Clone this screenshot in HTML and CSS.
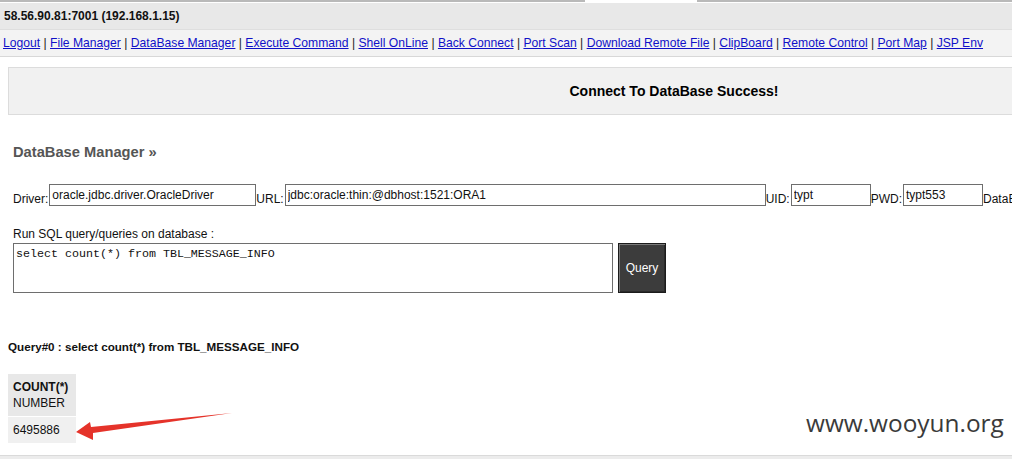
FILE: index.html
```html
<!DOCTYPE html>
<html>
<head>
<meta charset="utf-8">
<title>DataBase Manager</title>
<link rel="stylesheet" href="styles.css">
</head>
<body>
<div class="page">
  <div class="topline"><span class="seg-a"></span><span class="seg-b"></span><span class="seg-c"></span></div>
  <div class="host">58.56.90.81:7001 (192.168.1.15)</div>
  <div class="nav"><a href="#">Logout</a> | <a href="#">File Manager</a> | <a href="#">DataBase Manager</a> | <a href="#">Execute Command</a> | <a href="#">Shell OnLine</a> | <a href="#">Back Connect</a> | <a href="#">Port Scan</a> | <a href="#">Download Remote File</a> | <a href="#">ClipBoard</a> | <a href="#">Remote Control</a> | <a href="#">Port Map</a> | <a href="#">JSP Env</a></div>
  <div class="msg">Connect To DataBase Success!</div>
  <h2 class="title">DataBase Manager »</h2>
  <div class="conn">
    <span class="lbl">Driver:</span><input class="in in-driver" value="oracle.jdbc.driver.OracleDriver">
    <span class="lbl">URL:</span><input class="in in-url" value="jdbc:oracle:thin:@dbhost:1521:ORA1">
    <span class="lbl">UID:</span><input class="in in-small" value="typt">
    <span class="lbl">PWD:</span><input class="in in-small" value="typt553">
    <span class="lbl">DataBase:</span><input class="in in-small" value="ORACLE">
  </div>
  <div class="sqllbl">Run SQL query/queries on database :</div>
  <div class="sqlrow">
    <textarea class="sql">select count(*) from TBL_MESSAGE_INFO</textarea>
    <button class="qbtn">Query</button>
  </div>
  <div class="qtitle">Query#0 : select count(*) from TBL_MESSAGE_INFO</div>
  <table class="res">
    <tr><th><b>COUNT(*)</b><br>NUMBER</th></tr>
    <tr><td>6495886</td></tr>
  </table>
  <div class="bottomband"></div>
  <svg class="arrow" width="170" height="40" viewBox="0 0 170 40">
    <polygon points="6,27 20,17 21,22 162,8 23,28 23,35" fill="#e5332a"/>
  </svg>
  <div class="wm">www.wooyun.org</div>
</div>
</body>
</html>
```
FILE: styles.css
```css
html, body {
  margin: 0;
  padding: 0;
  overflow: hidden;
  background: #fff;
}
.page {
  position: relative;
  width: 1348px;
  height: 459px;
  font-family: "Liberation Sans", Arial, sans-serif;
  font-size: 12px;
  color: #111;
}
.topline {
  display: flex;
  height: 3px;
}
.seg-a { width: 585px; background: #b9b9b9; height: 2px; }
.seg-b { width: 112px; background: #fff; }
.seg-c { flex: 1; background: #b9b9b9; height: 2px; }
.host {
  height: 26px;
  line-height: 26px;
  background: #e8e8e8;
  padding-left: 4px;
  font-weight: bold;
  font-size: 12px;
}
.nav {
  height: 26px;
  line-height: 26px;
  background: #f3f3f3;
  border-top: 1px solid #dedede;
  border-bottom: 1px solid #d8d8d8;
  padding-left: 3px;
  font-size: 12.15px;
  color: #222;
  white-space: nowrap;
}
.nav a {
  color: #1010c8;
  text-decoration: underline;
}
.msg {
  margin: 10px 8px 0;
  height: 46px;
  line-height: 46px;
  background: #f1f1f1;
  border: 1px solid #dcdcdc;
  text-align: center;
  font-weight: bold;
  font-size: 14px;
  color: #000;
}
.title {
  margin: 29px 0 0;
  padding-left: 13px;
  font-size: 14.7px;
  line-height: 16px;
  font-weight: bold;
  color: #555;
}
.conn {
  display: flex;
  align-items: flex-end;
  margin-top: 24px;
  padding-left: 13px;
  white-space: nowrap;
}
.lbl {
  line-height: 14px;
  margin-right: 1px;
}
.in {
  box-sizing: border-box;
  height: 22px;
  border: 1px solid #6e6e6e;
  padding: 0 2px 1px;
  margin: 0;
  font-family: "Liberation Sans", Arial, sans-serif;
  font-size: 12px;
  color: #111;
  background: #fff;
  outline: none;
}
.in-driver { width: 207px; }
.in-url { width: 481px; }
.in-small { width: 80px; }
.sqllbl {
  margin-top: 21px;
  padding-left: 13px;
  line-height: 14px;
}
.sqlrow {
  display: flex;
  margin-top: 2px;
  padding-left: 13px;
}
.sql {
  box-sizing: border-box;
  width: 600px;
  height: 50px;
  border: 1px solid #6e6e6e;
  padding: 3px 2px;
  margin: 0;
  font-family: "Liberation Mono", "Courier New", monospace;
  font-size: 11.66px;
  line-height: 14px;
  color: #111;
  resize: none;
  outline: none;
}
.qbtn {
  box-sizing: border-box;
  width: 48px;
  height: 50px;
  margin-left: 5px;
  background: #3c3c3c;
  border: 1px solid #1c1c1c;
  box-shadow: inset 1px 1px 0 #7a7a7a, inset -1px -1px 0 #2a2a2a;
  color: #fff;
  font-family: "Liberation Sans", Arial, sans-serif;
  font-size: 12px;
  padding: 0;
}
.qtitle {
  margin-top: 47px;
  padding-left: 8px;
  line-height: 14px;
  font-weight: bold;
  font-size: 11.65px;
}
.res {
  margin: 19px 0 0 8px;
  border-collapse: separate;
  border-spacing: 0 1px;
}
.res th, .res td {
  width: 58px;
  padding: 5px;
  text-align: left;
  font-weight: normal;
  line-height: 16px;
  font-size: 12px;
  color: #111;
}
.res th { background: #e8e8e8; }
.res td { background: #f0f0f0; }
.bottomband {
  position: absolute;
  left: 0;
  right: 0;
  top: 455px;
  height: 4px;
  background: #ececec;
  border-top: 1px solid #dadada;
}
.arrow {
  position: absolute;
  left: 70px;
  top: 405px;
}
.wm {
  position: absolute;
  left: 806px;
  top: 406px;
  font-family: "Open Sans", "Noto Sans", sans-serif;
  font-size: 24.4px;
  line-height: 34px;
  color: #3a3a3a;
}
```
